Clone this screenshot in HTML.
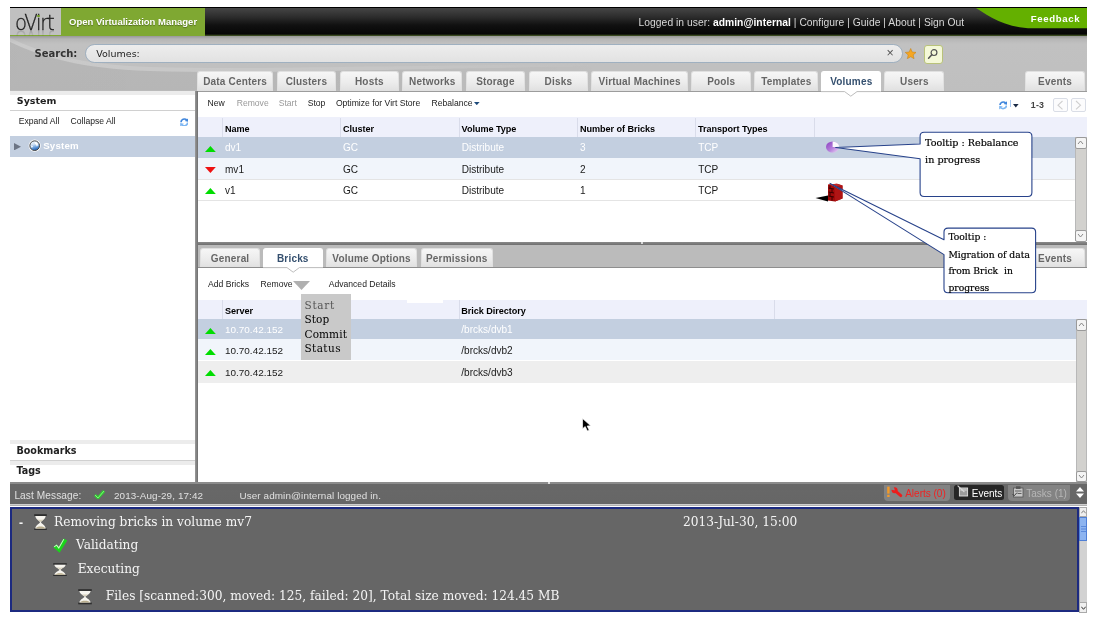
<!DOCTYPE html>
<html>
<head>
<meta charset="utf-8">
<title>oVirt Open Virtualization Manager</title>
<style>
html,body{margin:0;padding:0;background:#fff;}
body{width:1101px;height:628px;position:relative;overflow:hidden;font-family:"Liberation Sans",sans-serif;font-size:9.4px;color:#000;}
.a{position:absolute;white-space:nowrap;}
.dj{font-family:"DejaVu Sans","Liberation Sans",sans-serif;}
.se{font-family:"DejaVu Serif","Liberation Serif",serif;}
.b{font-weight:bold;}
#app{position:absolute;left:10px;top:7px;width:1077px;height:606px;overflow:hidden;will-change:transform;}
#hdr{left:0;top:0;width:1077px;height:29px;background:linear-gradient(#000 0,#000 1px,#444 1.5px,#2c2c2c 10px,#111 18px,#060606 27px,#3a4a20 28.5px);}
#logo{left:0;top:1px;width:51px;height:27px;background:#c0c0c0;border-bottom:1px solid #7fa832;}
#green{left:51px;top:1px;width:144px;height:28px;background:#7fa832;}
#srch{left:0;top:29px;width:1077px;height:54.5px;background:linear-gradient(#989898 0,#b6b6b6 3px,#c1c1c1 8px,#bfbfbf 100%);}
.tab{position:absolute;background:linear-gradient(#f6f6f6,#ececec 55%,#e0e0e0);border:1px solid #e0e0e0;border-bottom:none;border-radius:3px 3px 0 0;text-align:center;font-weight:bold;font-size:10px;color:#666;letter-spacing:0.18px;box-sizing:border-box;}
.tab.sel{background:#fff;color:#35506f;border-color:#fff;}
.w{color:#fff;}
</style>
</head>
<body>
<div id="app">
<div id="hdr" class="a"></div>
<div id="logo" class="a"></div>
<div class="a dj" style="left:4.6px;top:1.64px;font-size:20.7px;line-height:28px;font-family:'DejaVu Sans Light','DejaVu Sans',sans-serif;font-weight:200;letter-spacing:-1.3px;color:#1a1a1a;-webkit-text-stroke:0.3px #1a1a1a;transform-origin:0 21.3px;transform:scaleX(0.95);-webkit-box-reflect:below -13.4px linear-gradient(transparent 50%,rgba(0,0,0,0.28) 80%);">oVirt</div>
<div class="a " style="left:27.3px;top:7.7px;width:2.3px;height:2.3px;background:#6f9c22;border-radius:50%;"></div>
<div id="green" class="a"></div>
<div class="a b w" style="left:59px;top:8.91px;font-size:9.5px;line-height:12px;text-shadow:0 1px 1px rgba(0,0,0,.35);">Open Virtualization Manager</div>
<svg class="a" style="left:950px;top:1px" width="127" height="28" viewBox="0 0 127 28" preserveAspectRatio="none"><path d="M16,0 C30,9 46,19.5 70,20.3 L127,20.3 L127,0 Z" fill="#64b000"/></svg>
<div class="a " style="left:628.6px;top:8.53px;font-size:10.3px;line-height:13px;color:#d8d8d8;letter-spacing:0.03px;">Logged in user: <b style="color:#fff">admin@internal</b> | Configure | Guide | About | Sign Out</div>
<div class="a b w" style="left:1020.7px;top:5.57px;font-size:9.6px;line-height:12px;letter-spacing:0.65px;">Feedback</div>
<div id="srch" class="a"></div>
<svg class="a" style="left:0px;top:29px" width="600" height="54.5" viewBox="0 0 600 54.5" preserveAspectRatio="none"><defs><linearGradient id="sw" x1="0" y1="0" x2="1" y2="0"><stop offset="0" stop-color="#000" stop-opacity="0.055"/><stop offset="0.55" stop-color="#000" stop-opacity="0.04"/><stop offset="1" stop-color="#000" stop-opacity="0"/></linearGradient><linearGradient id="sw2" x1="0" y1="0" x2="1" y2="0"><stop offset="0" stop-color="#fff" stop-opacity="0.15"/><stop offset="0.6" stop-color="#fff" stop-opacity="0.1"/><stop offset="1" stop-color="#fff" stop-opacity="0"/></linearGradient></defs><path d="M0,6 C30,20 70,33 140,35 C240,38 330,34 600,30 L600,54.5 L0,54.5 Z" fill="url(#sw)"/><path d="M0,2 C30,16 70,29 140,31 C240,34 330,30 600,28 L600,30 C330,34 240,38 140,35 C70,33 30,20 0,6 Z" fill="url(#sw2)"/></svg>
<div class="a dj b" style="left:24.6px;top:40.44px;font-size:10px;line-height:13px;color:#333;">Search:</div>
<div class="a " style="left:75px;top:37px;width:816px;height:17px;border:1px solid #9fb0c0;border-radius:10px;background:linear-gradient(#ededed,#e2e2e2);"></div>
<div class="a dj" style="left:86.3px;top:41.11px;font-size:9.5px;line-height:12px;color:#222;">Volumes:</div>
<div class="a " style="left:876.5px;top:38.27px;font-size:12.5px;line-height:16px;color:#555;">&#215;</div>
<svg class="a" style="left:895px;top:41px" width="11.4" height="11.2" viewBox="0 0 24 24" preserveAspectRatio="none"><path d="M12 1 L15.3 8.6 L23.5 9.4 L17.3 14.9 L19.1 23 L12 18.8 L4.9 23 L6.7 14.9 L0.5 9.4 L8.7 8.6 Z" fill="#f5a623" stroke="#c47d0a" stroke-width="1"/></svg>
<div class="a " style="left:913.5px;top:37.5px;width:17px;height:17px;border:1px solid #b9c27a;border-radius:3px;background:#f4f8d8;"></div>
<svg class="a" style="left:917px;top:41px" width="12" height="12" viewBox="0 0 12 12" preserveAspectRatio="none"><circle cx="7" cy="4.6" r="2.9" fill="none" stroke="#555" stroke-width="1.2"/><path d="M4.8 6.8 L1.6 10.2" stroke="#555" stroke-width="1.6" stroke-linecap="round"/></svg>
<div class="tab" style="left:187px;top:64.1px;width:76.2px;height:19.5px;line-height:19px;">Data Centers</div>
<div class="tab" style="left:266.6px;top:64.1px;width:59.7px;height:19.5px;line-height:19px;">Clusters</div>
<div class="tab" style="left:329.5px;top:64.1px;width:59.6px;height:19.5px;line-height:19px;">Hosts</div>
<div class="tab" style="left:392.4px;top:64.1px;width:59.8px;height:19.5px;line-height:19px;">Networks</div>
<div class="tab" style="left:455.5px;top:64.1px;width:59.8px;height:19.5px;line-height:19px;">Storage</div>
<div class="tab" style="left:518.5px;top:64.1px;width:59.7px;height:19.5px;line-height:19px;">Disks</div>
<div class="tab" style="left:581.3px;top:64.1px;width:96.7px;height:19.5px;line-height:19px;">Virtual Machines</div>
<div class="tab" style="left:681.3px;top:64.1px;width:59.9px;height:19.5px;line-height:19px;">Pools</div>
<div class="tab" style="left:744.3px;top:64.1px;width:64.1px;height:19.5px;line-height:19px;">Templates</div>
<div class="tab sel" style="left:811.4px;top:64.1px;width:59.8px;height:19.5px;line-height:19px;">Volumes</div>
<div class="tab" style="left:874.4px;top:64.1px;width:59.9px;height:19.5px;line-height:19px;">Users</div>
<div class="tab" style="left:1015px;top:64.1px;width:60px;height:19.5px;line-height:19px;">Events</div>
<div class="a " style="left:0px;top:83.5px;width:185px;height:4px;background:#ececec;"></div>
<div class="a dj b" style="left:6.8px;top:88.31px;font-size:9.5px;line-height:12px;color:#222;">System</div>
<div class="a " style="left:0px;top:103px;width:185px;height:1px;background:#d0d0d0;"></div>
<div class="a " style="left:8.7px;top:109.22px;font-size:8.6px;line-height:11px;color:#222;">Expand All</div>
<div class="a " style="left:60.6px;top:109.22px;font-size:8.6px;line-height:11px;color:#222;">Collapse All</div>
<svg class="a" style="left:169.6px;top:110.5px" width="8.6" height="8.8" viewBox="0 0 8.4 9.2" preserveAspectRatio="none"><path d="M1.0 4.4 A3.3 3.3 0 0 1 6.6 2.0" fill="none" stroke="#3f86dc" stroke-width="1.7"/><path d="M8.2 0.2 L8.2 4.0 L4.6 3.2 Z" fill="#3f86dc"/><path d="M7.4 4.8 A3.3 3.3 0 0 1 1.8 7.2" fill="none" stroke="#7db6f2" stroke-width="1.7"/><path d="M0.2 9 L0.2 5.2 L3.8 6 Z" fill="#7db6f2"/></svg>
<div class="a " style="left:0px;top:128.5px;width:185px;height:21.5px;background:#c3cfe0;"></div>
<svg class="a" style="left:4.3px;top:135.8px" width="7" height="7.4" viewBox="0 0 7 8" preserveAspectRatio="none"><path d="M0 0 L7 4 L0 8 Z" fill="#6c7484"/></svg>
<svg class="a" style="left:17.6px;top:132.2px" width="13.4" height="13.4" viewBox="0 0 13 13" preserveAspectRatio="none"><defs><linearGradient id="gl" x1="0" y1="0" x2="0.3" y2="1"><stop offset="0" stop-color="#f6f9fd"/><stop offset="0.45" stop-color="#cfe0f4"/><stop offset="0.75" stop-color="#6a9edb"/><stop offset="1" stop-color="#2a68b8"/></linearGradient></defs><circle cx="6.5" cy="6.5" r="5.9" fill="#fff"/><circle cx="6.5" cy="6.5" r="4.7" fill="url(#gl)" stroke="#3a3a3a" stroke-width="0.9"/><path d="M6.6 3 C7.8 2.8 9.2 3.6 9.6 4.8 C9.8 6 9.2 6.8 8.6 7.4 C8 6.6 8.4 5.8 7.6 5.4 C6.8 5.2 6.2 4 6.6 3 Z M3 6.6 C3.6 6.2 4.6 6.6 4.8 7.4 C4.6 8.2 3.8 8.6 3.2 8 Z" fill="#fff" opacity="0.95"/></svg>
<div class="a b w" style="left:33.2px;top:132.04px;font-size:9.7px;line-height:13px;letter-spacing:0.2px;">System</div>
<div class="a " style="left:0px;top:433px;width:185px;height:3.6px;background:#ececec;"></div>
<div class="a dj b" style="left:6.4px;top:438.08px;font-size:9.6px;line-height:12px;color:#222;">Bookmarks</div>
<div class="a " style="left:0px;top:453px;width:185px;height:1px;background:#d0d0d0;"></div>
<div class="a " style="left:0px;top:454px;width:185px;height:3.6px;background:#ececec;"></div>
<div class="a dj b" style="left:6.4px;top:458.28px;font-size:9.6px;line-height:12px;color:#222;">Tags</div>
<div class="a " style="left:185px;top:83.5px;width:3px;height:391.5px;background:linear-gradient(90deg,#9a9a9a,#808080 60%,#6e6e6e);"></div>
<div class="a " style="left:188px;top:83.5px;width:889px;height:1.2px;background:#9c9c9c;"></div>
<div class="a " style="left:811.4px;top:83px;width:59.8px;height:2px;background:#fff;"></div>
<div class="a " style="left:197.6px;top:90.62px;font-size:8.6px;line-height:11px;color:#222;">New</div>
<div class="a " style="left:226.7px;top:90.62px;font-size:8.6px;line-height:11px;color:#999;">Remove</div>
<div class="a " style="left:268.7px;top:90.62px;font-size:8.6px;line-height:11px;color:#999;">Start</div>
<div class="a " style="left:297.7px;top:90.62px;font-size:8.6px;line-height:11px;color:#222;">Stop</div>
<div class="a " style="left:325.9px;top:90.62px;font-size:8.6px;line-height:11px;color:#222;">Optimize for Virt Store</div>
<div class="a " style="left:421.5px;top:90.62px;font-size:8.6px;line-height:11px;color:#222;">Rebalance</div>
<svg class="a" style="left:464.2px;top:94.9px" width="5.6" height="3.2" viewBox="0 0 6 4" preserveAspectRatio="none"><path d="M0 0 L6 0 L3 4 Z" fill="#1d4a7a"/></svg>
<svg class="a" style="left:811.4px;top:83.6px" width="59.8" height="6" viewBox="0 0 59.8 6" preserveAspectRatio="none"><path d="M0 0.6 H23.6 L29.8 5.2 L36 0.6 H59.8" fill="none" stroke="#b4b4b4" stroke-width="0.9"/></svg>
<svg class="a" style="left:988.7px;top:94px" width="8.4" height="8.6" viewBox="0 0 8.4 9.2" preserveAspectRatio="none"><path d="M1.0 4.4 A3.3 3.3 0 0 1 6.6 2.0" fill="none" stroke="#3f86dc" stroke-width="1.7"/><path d="M8.2 0.2 L8.2 4.0 L4.6 3.2 Z" fill="#3f86dc"/><path d="M7.4 4.8 A3.3 3.3 0 0 1 1.8 7.2" fill="none" stroke="#7db6f2" stroke-width="1.7"/><path d="M0.2 9 L0.2 5.2 L3.8 6 Z" fill="#7db6f2"/></svg>
<div class="a " style="left:999.7px;top:92.9px;width:1px;height:6.8px;background:#a8c8f0;"></div>
<svg class="a" style="left:1003px;top:97px" width="5.6" height="3.6" viewBox="0 0 6 4" preserveAspectRatio="none"><path d="M0 0 L6 0 L3 4 Z" fill="#1a2a44"/></svg>
<div class="a b" style="left:1020.8px;top:93.35px;font-size:8.8px;line-height:11px;color:#444;letter-spacing:0.2px;">1-3</div>
<div class="a " style="left:1043px;top:91.1px;width:14.6px;height:14.3px;border:1px solid #d9dde6;border-radius:2px;box-sizing:border-box;background:#fcfcfd;"></div>
<svg class="a" style="left:1043px;top:91.1px" width="14.6" height="14.3" viewBox="0 0 14.6 14.3" preserveAspectRatio="none"><path d="M9.5 3 L5 7.2 L9.5 11.4" fill="none" stroke="#cfcfcf" stroke-width="1.1"/></svg>
<div class="a " style="left:1061.2px;top:91.1px;width:14.6px;height:14.3px;border:1px solid #d9dde6;border-radius:2px;box-sizing:border-box;background:#fcfcfd;"></div>
<svg class="a" style="left:1061.2px;top:91.1px" width="14.6" height="14.3" viewBox="0 0 14.6 14.3" preserveAspectRatio="none"><path d="M5 3 L9.5 7.2 L5 11.4" fill="none" stroke="#cfcfcf" stroke-width="1.1"/></svg>
<div class="a " style="left:188px;top:110.2px;width:889px;height:19.8px;background:#eef0fb;"></div>
<div class="a " style="left:212px;top:111px;width:1px;height:19px;background:#d9dcea;"></div>
<div class="a " style="left:330px;top:111px;width:1px;height:19px;background:#d9dcea;"></div>
<div class="a " style="left:448.7px;top:111px;width:1px;height:19px;background:#d9dcea;"></div>
<div class="a " style="left:567.1px;top:111px;width:1px;height:19px;background:#d9dcea;"></div>
<div class="a " style="left:685.2px;top:111px;width:1px;height:19px;background:#d9dcea;"></div>
<div class="a " style="left:803.6px;top:111px;width:1px;height:19px;background:#d9dcea;"></div>
<div class="a " style="left:214.9px;top:116.15px;font-size:9.1px;line-height:12px;font-weight:bold;letter-spacing:-0.05px;color:#000;">Name</div>
<div class="a " style="left:332.9px;top:116.15px;font-size:9.1px;line-height:12px;font-weight:bold;letter-spacing:-0.05px;color:#000;">Cluster</div>
<div class="a " style="left:451.6px;top:116.15px;font-size:9.1px;line-height:12px;font-weight:bold;letter-spacing:-0.05px;color:#000;">Volume Type</div>
<div class="a " style="left:570.0px;top:116.15px;font-size:9.1px;line-height:12px;font-weight:bold;letter-spacing:-0.05px;color:#000;">Number of Bricks</div>
<div class="a " style="left:688.1px;top:116.15px;font-size:9.1px;line-height:12px;font-weight:bold;letter-spacing:-0.05px;color:#000;">Transport Types</div>
<div class="a " style="left:188px;top:130px;width:877.5px;height:20.8px;background:#c3cfe0;"></div>
<div class="a " style="left:215px;top:134.27px;font-size:10.05px;line-height:13px;color:#fff;">dv1</div>
<div class="a " style="left:333px;top:134.27px;font-size:10.05px;line-height:13px;color:#fff;">GC</div>
<div class="a " style="left:451.7px;top:134.27px;font-size:10.05px;line-height:13px;color:#fff;">Distribute</div>
<div class="a " style="left:570.1px;top:134.27px;font-size:10.05px;line-height:13px;color:#fff;">3</div>
<div class="a " style="left:688.2px;top:134.27px;font-size:10.05px;line-height:13px;color:#fff;">TCP</div>
<div class="a " style="left:188px;top:150.8px;width:877.5px;height:22.2px;background:#f1f5fb;border-bottom:1px solid #e4e4e4;box-sizing:border-box;"></div>
<div class="a " style="left:215px;top:155.52px;font-size:10.05px;line-height:13px;color:#1a1a1a;">mv1</div>
<div class="a " style="left:333px;top:155.52px;font-size:10.05px;line-height:13px;color:#1a1a1a;">GC</div>
<div class="a " style="left:451.7px;top:155.52px;font-size:10.05px;line-height:13px;color:#1a1a1a;">Distribute</div>
<div class="a " style="left:570.1px;top:155.52px;font-size:10.05px;line-height:13px;color:#1a1a1a;">2</div>
<div class="a " style="left:688.2px;top:155.52px;font-size:10.05px;line-height:13px;color:#1a1a1a;">TCP</div>
<div class="a " style="left:188px;top:173px;width:877.5px;height:21px;background:#fff;border-bottom:1px solid #e4e4e4;box-sizing:border-box;"></div>
<div class="a " style="left:215px;top:176.77px;font-size:10.05px;line-height:13px;color:#1a1a1a;">v1</div>
<div class="a " style="left:333px;top:176.77px;font-size:10.05px;line-height:13px;color:#1a1a1a;">GC</div>
<div class="a " style="left:451.7px;top:176.77px;font-size:10.05px;line-height:13px;color:#1a1a1a;">Distribute</div>
<div class="a " style="left:570.1px;top:176.77px;font-size:10.05px;line-height:13px;color:#1a1a1a;">1</div>
<div class="a " style="left:688.2px;top:176.77px;font-size:10.05px;line-height:13px;color:#1a1a1a;">TCP</div>
<svg class="a" style="left:195.1px;top:138.7px" width="10.8" height="6" viewBox="0 0 10 6" preserveAspectRatio="none"><path d="M0 6 L5 0 L10 6 Z" fill="#00dd00"/></svg>
<svg class="a" style="left:195.1px;top:159.8px" width="10.8" height="6" viewBox="0 0 10 6" preserveAspectRatio="none"><path d="M0 0 L10 0 L5 6 Z" fill="#ee1111"/></svg>
<svg class="a" style="left:195.1px;top:181.2px" width="10.8" height="6" viewBox="0 0 10 6" preserveAspectRatio="none"><path d="M0 6 L5 0 L10 6 Z" fill="#00dd00"/></svg>
<div class="a " style="left:1065.2px;top:130.2px;width:11.5px;height:104.3px;background:#d2d1ce;border-left:1px solid #b8b8b8;border-right:1px solid #b8b8b8;box-sizing:border-box;"></div>
<div class="a " style="left:1065.2px;top:130.2px;width:11.5px;height:11.5px;background:#f4f4f4;border:1px solid #9a9a9a;border-radius:2px;box-sizing:border-box;"></div>
<svg class="a" style="left:1067.4px;top:133.4px" width="7" height="5" viewBox="0 0 7 5" preserveAspectRatio="none"><path d="M1 4 L3.5 1 L6 4" fill="none" stroke="#888" stroke-width="1"/></svg>
<div class="a " style="left:1065.2px;top:223.0px;width:11.5px;height:11.5px;background:#f4f4f4;border:1px solid #9a9a9a;border-radius:2px;box-sizing:border-box;"></div>
<svg class="a" style="left:1067.4px;top:226.2px" width="7" height="5" viewBox="0 0 7 5" preserveAspectRatio="none"><path d="M1 1 L3.5 4 L6 1" fill="none" stroke="#888" stroke-width="1"/></svg>
<div class="a " style="left:188px;top:235.2px;width:889px;height:3px;background:linear-gradient(#8a8a8a,#6e6e6e);"></div>
<div class="a " style="left:188px;top:238.2px;width:889px;height:22px;background:#bbbbbb;"></div>
<div class="a " style="left:188px;top:260px;width:889px;height:1px;background:#8e8e8e;"></div>
<div class="tab" style="left:190px;top:240.8px;width:60.2px;height:19.4px;line-height:19px;">General</div>
<div class="tab sel" style="left:252.6px;top:240.8px;width:60.4px;height:19.4px;line-height:19px;">Bricks</div>
<div class="tab" style="left:315.6px;top:240.8px;width:91.9px;height:19.4px;line-height:19px;">Volume Options</div>
<div class="tab" style="left:410.5px;top:240.8px;width:72.5px;height:19.4px;line-height:19px;">Permissions</div>
<div class="tab" style="left:1015px;top:240.8px;width:60px;height:19.4px;line-height:19px;">Events</div>
<div class="a " style="left:252.6px;top:259.8px;width:60.4px;height:1.6px;background:#fff;"></div>
<svg class="a" style="left:252.6px;top:260.2px" width="60.4" height="6" viewBox="0 0 60.4 6" preserveAspectRatio="none"><path d="M0 0.6 H24 L30.2 5.2 L36.4 0.6 H60.4" fill="none" stroke="#b4b4b4" stroke-width="0.9"/></svg>
<div class="a " style="left:198px;top:272.02px;font-size:8.6px;line-height:11px;color:#222;">Add Bricks</div>
<div class="a " style="left:250.6px;top:272.02px;font-size:8.6px;line-height:11px;color:#222;">Remove</div>
<div class="a " style="left:318.7px;top:272.02px;font-size:8.6px;line-height:11px;color:#222;">Advanced Details</div>
<svg class="a" style="left:283px;top:274.3px" width="17" height="9" viewBox="0 0 17 9" preserveAspectRatio="none"><path d="M0 0 L17 0 L8.5 9 Z" fill="#b0b0b0"/></svg>
<div class="a " style="left:188px;top:292.5px;width:889px;height:19.5px;background:#eef0fb;"></div>
<div class="a " style="left:397px;top:292px;width:36px;height:3.5px;background:#fff;"></div>
<div class="a " style="left:212px;top:293px;width:1px;height:19px;background:#d9dcea;"></div>
<div class="a " style="left:448.8px;top:293px;width:1px;height:19px;background:#d9dcea;"></div>
<div class="a " style="left:764px;top:293px;width:1px;height:19px;background:#d9dcea;"></div>
<div class="a " style="left:215px;top:297.60px;font-size:9.1px;line-height:12px;font-weight:bold;letter-spacing:-0.05px;color:#000;">Server</div>
<div class="a " style="left:451.3px;top:297.60px;font-size:9.1px;line-height:12px;font-weight:bold;letter-spacing:-0.05px;color:#000;">Brick Directory</div>
<div class="a " style="left:188px;top:312px;width:878px;height:19.8px;background:#c3cfe0;"></div>
<div class="a " style="left:215px;top:316.05px;font-size:9.95px;line-height:13px;color:#fff;">10.70.42.152</div>
<div class="a " style="left:451.3px;top:316.02px;font-size:10.05px;line-height:13px;color:#fff;">/brcks/dvb1</div>
<svg class="a" style="left:195.1px;top:320.7px" width="10.8" height="6" viewBox="0 0 10 6" preserveAspectRatio="none"><path d="M0 6 L5 0 L10 6 Z" fill="#00dd00"/></svg>
<div class="a " style="left:188px;top:331.8px;width:878px;height:21.7px;background:#f1f5fb;"></div>
<div class="a " style="left:215px;top:337.30px;font-size:9.95px;line-height:13px;color:#1a1a1a;">10.70.42.152</div>
<div class="a " style="left:451.3px;top:337.27px;font-size:10.05px;line-height:13px;color:#1a1a1a;">/brcks/dvb2</div>
<svg class="a" style="left:195.1px;top:341.95px" width="10.8" height="6" viewBox="0 0 10 6" preserveAspectRatio="none"><path d="M0 6 L5 0 L10 6 Z" fill="#00dd00"/></svg>
<div class="a " style="left:188px;top:353.5px;width:878px;height:22.0px;background:#eeeeee;"></div>
<div class="a " style="left:215px;top:358.55px;font-size:9.95px;line-height:13px;color:#1a1a1a;">10.70.42.152</div>
<div class="a " style="left:451.3px;top:358.52px;font-size:10.05px;line-height:13px;color:#1a1a1a;">/brcks/dvb3</div>
<svg class="a" style="left:195.1px;top:363.2px" width="10.8" height="6" viewBox="0 0 10 6" preserveAspectRatio="none"><path d="M0 6 L5 0 L10 6 Z" fill="#00dd00"/></svg>
<div class="a " style="left:1065.5px;top:312.2px;width:11.5px;height:162.8px;background:#d2d1ce;border-left:1px solid #b8b8b8;border-right:1px solid #b8b8b8;box-sizing:border-box;"></div>
<div class="a " style="left:1065.5px;top:312.2px;width:11.5px;height:11.5px;background:#f4f4f4;border:1px solid #9a9a9a;border-radius:2px;box-sizing:border-box;"></div>
<svg class="a" style="left:1067.7px;top:315.4px" width="7" height="5" viewBox="0 0 7 5" preserveAspectRatio="none"><path d="M1 4 L3.5 1 L6 4" fill="none" stroke="#888" stroke-width="1"/></svg>
<div class="a " style="left:1065.5px;top:463.5px;width:11.5px;height:11.5px;background:#f4f4f4;border:1px solid #9a9a9a;border-radius:2px;box-sizing:border-box;"></div>
<svg class="a" style="left:1067.7px;top:466.7px" width="7" height="5" viewBox="0 0 7 5" preserveAspectRatio="none"><path d="M1 1 L3.5 4 L6 1" fill="none" stroke="#888" stroke-width="1"/></svg>
<div class="a " style="left:291.2px;top:287.3px;width:49.5px;height:65.6px;background:#c9c9c9;"></div>
<div class="a se" style="left:294.5px;top:291.06px;font-size:10.5px;line-height:14px;color:#555;letter-spacing:0.7px;">Start</div>
<div class="a se" style="left:294.5px;top:305.31px;font-size:10.5px;line-height:14px;color:#000;letter-spacing:0.1px;">Stop</div>
<div class="a se" style="left:294.5px;top:319.81px;font-size:10.5px;line-height:14px;color:#000;letter-spacing:0.1px;">Commit</div>
<div class="a se" style="left:294.5px;top:334.06px;font-size:10.5px;line-height:14px;color:#000;letter-spacing:0.4px;">Status</div>
<svg class="a" style="left:571.8px;top:410.8px" width="9.6" height="14" viewBox="0 0 9 15" preserveAspectRatio="none"><path d="M0.5 0.5 L0.5 11.5 L3 9.2 L5 13.8 L6.8 13 L4.8 8.6 L8.2 8.4 Z" fill="#000" stroke="#fff" stroke-width="0.7"/></svg>
<div class="a " style="left:631px;top:235.2px;width:1.5px;height:1.5px;background:#d8d8d8;"></div>
<div class="a " style="left:0px;top:474.8px;width:1077px;height:24px;background:linear-gradient(#8c8c8c 0,#8c8c8c 1.5px,#686868 2.5px,#666 21.5px,#cfcfcf 22px,#cfcfcf 23.3px,#666 24px);"></div>
<div class="a " style="left:538px;top:475px;width:1.5px;height:1.5px;background:#e0e0e0;"></div>
<div class="a " style="left:4.4px;top:482.00px;font-size:10.1px;line-height:13px;color:#e0e0e0;letter-spacing:0.1px;">Last Message:</div>
<svg class="a" style="left:84.4px;top:482.5px" width="11" height="9" viewBox="0 0 11 9" preserveAspectRatio="none"><path d="M1 5 L4 8 L10 1" fill="none" stroke="#2fd02f" stroke-width="2.7"/><path d="M1 5 L4 8 L10 1" fill="none" stroke="#b8ffb0" stroke-width="0.6"/></svg>
<div class="a " style="left:104px;top:482.37px;font-size:9.9px;line-height:13px;color:#e0e0e0;letter-spacing:0.1px;">2013-Aug-29, 17:42</div>
<div class="a " style="left:229.5px;top:482.37px;font-size:9.9px;line-height:13px;color:#e0e0e0;letter-spacing:0.1px;">User admin@internal logged in.</div>
<div class="a " style="left:873.6px;top:477.6px;width:66px;height:16px;background:#838383;border-radius:0 0 4px 4px;"></div>
<div class="a " style="left:944px;top:477.8px;width:50.3px;height:15.2px;background:#262626;border-radius:2.5px;"></div>
<div class="a " style="left:998px;top:477.6px;width:62.4px;height:16px;background:#838383;border-radius:0 0 4px 4px;"></div>
<div class="a " style="left:895.2px;top:479.64px;font-size:10px;line-height:13px;color:#f02222;">Alerts (0)</div>
<div class="a " style="left:961.8px;top:479.64px;font-size:10px;line-height:13px;color:#fff;">Events</div>
<div class="a " style="left:1016.3px;top:479.64px;font-size:10px;line-height:13px;color:#b6b6b6;">Tasks (1)</div>
<svg class="a" style="left:876.5px;top:479px" width="17" height="12" viewBox="0 0 17 12" preserveAspectRatio="none"><rect x="0.2" y="0.6" width="2.4" height="7" fill="#f39a28"/><rect x="0.2" y="8.8" width="2.4" height="2.2" fill="#f39a28"/><circle cx="7.6" cy="4.2" r="3" fill="#ee1c1c"/><path d="M8 4.6 L3.6 3.4 L6.4 0 Z" fill="#838383"/><path d="M8.8 5.4 L13.8 9.6" stroke="#ee1c1c" stroke-width="2.9" stroke-linecap="round"/></svg>
<svg class="a" style="left:947px;top:478.4px" width="12" height="12" viewBox="0 0 12 12" preserveAspectRatio="none"><rect x="2.4" y="3" width="8.2" height="8" fill="#9c9c9c" stroke="#e2e2e2" stroke-width="0.9"/><path d="M3.4 5 H9.8" stroke="#e8e8e8" stroke-width="0.9"/><path d="M0.6 0.6 L7.4 7" stroke="#d8d8d8" stroke-width="1.1"/></svg>
<svg class="a" style="left:1001.5px;top:479px" width="12" height="12" viewBox="0 0 12 12" preserveAspectRatio="none"><rect x="1.5" y="2" width="9.5" height="9" fill="#c8c8c8" stroke="#555" stroke-width="0.8"/><rect x="4" y="0.3" width="4.5" height="2.6" fill="#555"/><path d="M3 5 H9.5 M5.5 7.5 H9.5" stroke="#555" stroke-width="0.9"/><path d="M0.5 8 L2.2 9.8 L5 6.6" fill="none" stroke="#444" stroke-width="1"/></svg>
<svg class="a" style="left:1065.6px;top:480px" width="8" height="11" viewBox="0 0 8 11" preserveAspectRatio="none"><path d="M0 4.6 L4 0 L8 4.6 Z M0 6.4 L8 6.4 L4 11 Z" fill="#fff"/></svg>
<div class="a " style="left:0px;top:499.5px;width:1069px;height:105.8px;background:#666;border:2px solid #1c2a80;box-sizing:border-box;"></div>
<div class="a b" style="left:9px;top:507.97px;font-size:12.2px;line-height:16px;color:#f4f4f4;">-</div>
<svg class="a" style="left:23.6px;top:506.8px" width="13" height="16.5" viewBox="0 0 13 17" preserveAspectRatio="none"><rect x="0.2" y="0.2" width="12.6" height="1.9" fill="#2e2e2e"/><rect x="0.2" y="14.9" width="12.6" height="1.9" fill="#2e2e2e"/><path d="M1.3 2.1 L11.7 2.1 C11.6 5.2 7.6 7 6.9 8.5 C7.6 10 11.6 11.8 11.7 14.9 L1.3 14.9 C1.4 11.8 5.4 10 6.1 8.5 C5.4 7 1.4 5.2 1.3 2.1 Z" fill="#f6f4ee"/><path d="M3.2 5.4 C5 6.2 8 6.2 9.8 5.4 C8.6 6.8 7.4 7.4 6.5 8.3 C5.6 7.4 4.4 6.8 3.2 5.4 Z" fill="#d6cfba"/><path d="M1.8 14.9 C2.6 12.2 10.4 12.2 11.2 14.9 Z" fill="#b9ad8c"/></svg>
<div class="a se" style="left:44px;top:506.71px;font-size:12.2px;line-height:16px;color:#f4f4f4;">Removing bricks in volume mv7</div>
<div class="a se" style="left:673px;top:506.71px;font-size:12.2px;line-height:16px;color:#f4f4f4;">2013-Jul-30, 15:00</div>
<svg class="a" style="left:43px;top:530.6px" width="14.5" height="15" viewBox="0 0 15 16" preserveAspectRatio="none"><path d="M0.3 9.8 L3.9 7 L6 10 L10.8 0.4 L14.8 2.6 L6.8 15.8 Z" fill="#1ad41a"/><path d="M1.2 9.4 L3.7 7.6 L6 10.6 L11.2 1.2" fill="none" stroke="#c6ffc0" stroke-width="1.1"/></svg>
<div class="a se" style="left:66px;top:529.71px;font-size:12.2px;line-height:16px;color:#f4f4f4;">Validating</div>
<svg class="a" style="left:43.4px;top:555.5px" width="14" height="13.5" viewBox="0 0 13 17" preserveAspectRatio="none"><rect x="0.2" y="0.2" width="12.6" height="1.9" fill="#2e2e2e"/><rect x="0.2" y="14.9" width="12.6" height="1.9" fill="#2e2e2e"/><path d="M1.3 2.1 L11.7 2.1 C11.6 5.2 7.6 7 6.9 8.5 C7.6 10 11.6 11.8 11.7 14.9 L1.3 14.9 C1.4 11.8 5.4 10 6.1 8.5 C5.4 7 1.4 5.2 1.3 2.1 Z" fill="#f6f4ee"/><path d="M3.2 5.4 C5 6.2 8 6.2 9.8 5.4 C8.6 6.8 7.4 7.4 6.5 8.3 C5.6 7.4 4.4 6.8 3.2 5.4 Z" fill="#d6cfba"/><path d="M1.8 14.9 C2.6 12.2 10.4 12.2 11.2 14.9 Z" fill="#b9ad8c"/></svg>
<div class="a se" style="left:67.7px;top:554.21px;font-size:12.2px;line-height:16px;color:#f4f4f4;">Executing</div>
<svg class="a" style="left:67.7px;top:582px" width="14" height="15.5" viewBox="0 0 13 17" preserveAspectRatio="none"><rect x="0.2" y="0.2" width="12.6" height="1.9" fill="#2e2e2e"/><rect x="0.2" y="14.9" width="12.6" height="1.9" fill="#2e2e2e"/><path d="M1.3 2.1 L11.7 2.1 C11.6 5.2 7.6 7 6.9 8.5 C7.6 10 11.6 11.8 11.7 14.9 L1.3 14.9 C1.4 11.8 5.4 10 6.1 8.5 C5.4 7 1.4 5.2 1.3 2.1 Z" fill="#f6f4ee"/><path d="M3.2 5.4 C5 6.2 8 6.2 9.8 5.4 C8.6 6.8 7.4 7.4 6.5 8.3 C5.6 7.4 4.4 6.8 3.2 5.4 Z" fill="#d6cfba"/><path d="M1.8 14.9 C2.6 12.2 10.4 12.2 11.2 14.9 Z" fill="#b9ad8c"/></svg>
<div class="a se" style="left:95.7px;top:580.91px;font-size:12.2px;line-height:16px;color:#f4f4f4;">Files [scanned:300, moved: 125, failed: 20], Total size moved: 124.45 MB</div>
<div class="a " style="left:1069.2px;top:499.5px;width:7.6px;height:106px;background:#d2d2d2;border-left:1px solid #aaa;box-sizing:border-box;"></div>
<div class="a " style="left:1069.2px;top:499.5px;width:7.6px;height:10.5px;background:#efefef;border:1px solid #aaa;box-sizing:border-box;"></div>
<div class="a " style="left:1069.2px;top:595px;width:7.6px;height:10.5px;background:#efefef;border:1px solid #aaa;box-sizing:border-box;"></div>
<div class="a " style="left:1069.2px;top:510px;width:7.6px;height:23.5px;background:#8db4f0;border:1px solid #4f7fd6;box-sizing:border-box;"></div>
<svg class="a" style="left:1070.6px;top:502.5px" width="5" height="4" viewBox="0 0 5 4" preserveAspectRatio="none"><path d="M0.3 3.3 L2.5 0.7 L4.7 3.3" fill="none" stroke="#777" stroke-width="0.9"/></svg>
<svg class="a" style="left:1070.6px;top:598.5px" width="5" height="4" viewBox="0 0 5 4" preserveAspectRatio="none"><path d="M0.3 0.7 L2.5 3.3 L4.7 0.7" fill="none" stroke="#333" stroke-width="1"/></svg>
<svg class="a" style="left:1071px;top:518.5px" width="5" height="6" viewBox="0 0 5 6" preserveAspectRatio="none"><path d="M0 0.5 H5 M0 3 H5 M0 5.5 H5" stroke="#4f7fd6" stroke-width="0.8"/></svg>
<svg class="a" style="left:814.8px;top:134.2px" width="15.2" height="12.2" viewBox="0 0 17 16" preserveAspectRatio="none"><defs><linearGradient id="pg" x1="0" y1="0" x2="1" y2="1"><stop offset="0" stop-color="#8a3fc0"/><stop offset="0.55" stop-color="#b680dc"/><stop offset="1" stop-color="#f0e2f8"/></linearGradient></defs><circle cx="8.5" cy="8" r="7.4" fill="url(#pg)"/><path d="M8.5 8 L8.5 0.6 A7.4 7.4 0 0 1 15.9 8 Z" fill="#fbf8fd"/></svg>
<svg class="a" style="left:805px;top:176px" width="28" height="19" viewBox="0 0 28 19" preserveAspectRatio="none"><path d="M0.5 15 L13 12.5 L13 18.5 Z" fill="#000"/><path d="M13 1.5 L22 0.8 L27.5 2.5 L27.5 15.5 L20 18.5 L13 17.5 Z" fill="#a00a0a"/><path d="M13 1.5 L22 0.8 L27.5 2.5 L19.5 3.4 Z" fill="#c02626"/><path d="M19.5 3.4 L27.5 2.5 L27.5 15.5 L20 18.5 Z" fill="#b01414"/><path d="M13.5 5 L19 6 M13.5 9 L19 10 M13.5 13 L19 14 M15 2.5 L15 6 M17 6 L17 10 M15 9.5 L15 13.5 M17 13.5 L17 17.5" stroke="#3a0000" stroke-width="1"/></svg>
<svg class="a" style="left:790px;top:118px" width="287" height="175" viewBox="800 125 287 175" preserveAspectRatio="none"><path d="M924.1 132.3 H1027.9 Q1031.9 132.3 1031.9 136.3 V192.5 Q1031.9 196.5 1027.9 196.5 H924.1 Q920.1 196.5 920.1 192.5 V158.8 L835.7 147.5 L920.1 144 V136.3 Q920.1 132.3 924.1 132.3 Z" fill="#fff" stroke="#27428a" stroke-width="1.1" stroke-linejoin="round"/><path d="M948 228.1 H1031.6 Q1035.6 228.1 1035.6 232.1 V288.7 Q1035.6 292.7 1031.6 292.7 H948 Q944 292.7 944 288.7 V254.6 L830 183.4 L944 239.7 V232.1 Q944 228.1 948 228.1 Z" fill="#fff" stroke="#27428a" stroke-width="1.1" stroke-linejoin="round"/></svg>
<div class="a se" style="left:915.1px;top:129.73px;font-size:9.6px;line-height:12px;color:#000;-webkit-text-stroke:0.2px #000;">Tooltip : Rebalance</div>
<div class="a se" style="left:915.1px;top:146.73px;font-size:9.6px;line-height:12px;color:#000;-webkit-text-stroke:0.2px #000;">in progress</div>
<div class="a se" style="left:938.4px;top:224.17px;font-size:9.2px;line-height:12px;color:#000;-webkit-text-stroke:0.2px #000;">Tooltip :</div>
<div class="a se" style="left:938.4px;top:241.57px;font-size:9.2px;line-height:12px;color:#000;-webkit-text-stroke:0.2px #000;">Migration of data</div>
<div class="a se" style="left:938.4px;top:257.97px;font-size:9.2px;line-height:12px;color:#000;-webkit-text-stroke:0.2px #000;">from Brick&nbsp; in</div>
<div class="a se" style="left:938.4px;top:274.77px;font-size:9.2px;line-height:12px;color:#000;-webkit-text-stroke:0.2px #000;">progress</div>
</div>
</body>
</html>
